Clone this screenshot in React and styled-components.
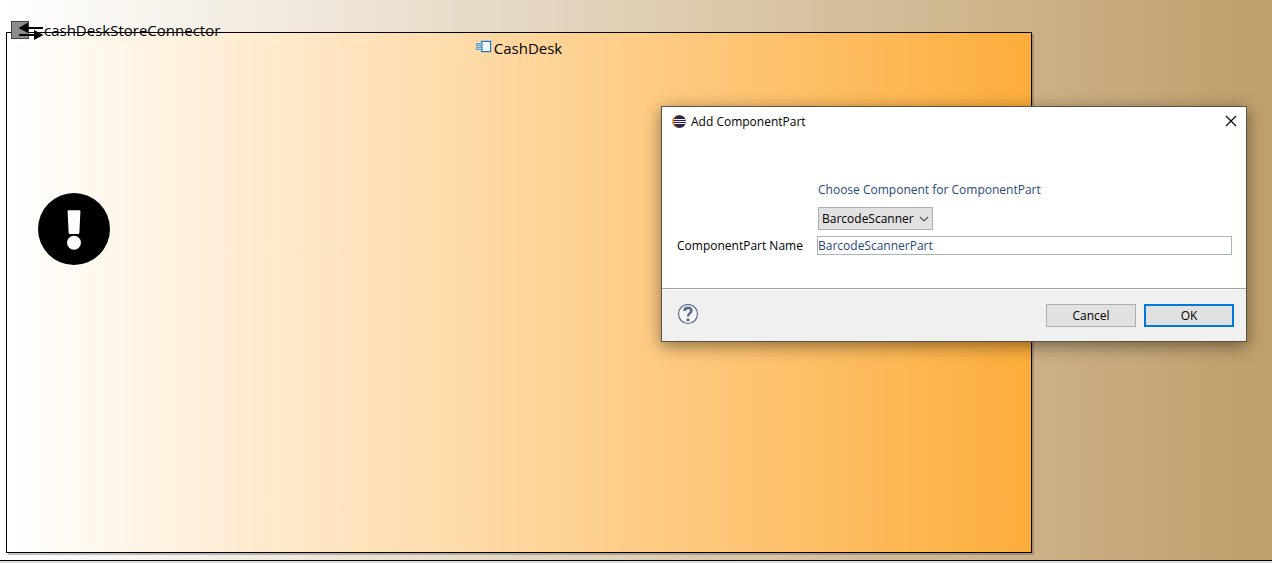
import React, { useState } from "react";
import styled, { createGlobalStyle } from "styled-components";

const GlobalStyle = createGlobalStyle`
  * { box-sizing: border-box; }
  body {
    margin: 0;
    color: #000;
    font: 12px/16px "Open Sans", "Noto Sans", sans-serif;
  }
`;

const Page = styled.div`
  position: relative;
  display: flex;
  flex-direction: column;
  min-height: 100vh;
  background: #dcdadd;
  padding-bottom: 2px;
  overflow: hidden;
`;

const Diagram = styled.main`
  flex: 1;
  display: flex;
  padding: 32px 240px 7px 6px;
  border-bottom: 1px solid #000;
  background: linear-gradient(to right, #fff, #bf9f6a);
`;

const ComponentNode = styled.section`
  position: relative;
  flex: 1;
  display: flex;
  flex-direction: column;
  align-items: flex-start;
  border: 1px solid #000;
  background: linear-gradient(to right, #fff, #fdad3b);
  box-shadow: 2px 2px 0 rgba(90, 80, 90, 0.35);
`;

const NodeTitle = styled.h1`
  display: flex;
  align-self: center;
  align-items: flex-start;
  gap: 2px;
  margin: 5px 0 0;
  font-size: 15px;
  line-height: 20px;
  font-weight: 400;

  svg { margin-top: 2px; }
`;

const Alert = styled.div`
  margin: 135px 0 0 31px;
  line-height: 0;
`;

const Port = styled.div`
  position: absolute;
  top: -13px;
  left: 4px;
  display: flex;
  align-items: center;
  font-size: 15px;
  line-height: 20px;
`;

const Dialog = styled.form`
  position: absolute;
  top: 106px;
  right: 25px;
  width: 586px;
  border: 1px solid #5d523f;
  background: #fff;
  box-shadow: 0 4px 16px rgba(0, 0, 0, 0.45);
`;

const TitleBar = styled.header`
  display: flex;
  align-items: center;
  gap: 5px;
  height: 30px;
  padding: 0 8px 0 10px;
`;

const DialogTitle = styled.h2`
  flex: 1;
  margin: 0;
  font-size: 12px;
  font-weight: 400;
`;

const IconButton = styled.button`
  display: flex;
  padding: 0;
  border: 0;
  background: none;
`;

const Fields = styled.div`
  display: grid;
  grid-template-columns: 140px 1fr;
  align-items: center;
  padding: 45px 14px 33px 15px;
`;

const Hint = styled.label`
  grid-column: 2;
  margin: 0 0 9px 1px;
  color: #1f4a7d;
`;

const SelectBox = styled.div`
  grid-column: 2;
  position: relative;
  justify-self: start;
  display: flex;
  margin: 0 0 6px 1px;

  svg {
    position: absolute;
    right: 4px;
    top: 8px;
    pointer-events: none;
  }
`;

const Select = styled.select`
  appearance: none;
  width: 115px;
  height: 23px;
  padding: 0 3px;
  border: 1px solid #adadad;
  border-radius: 0;
  background: #e1e1e1;
  color: #000;
  font: inherit;
`;

const TextInput = styled.input`
  width: 100%;
  height: 19px;
  padding: 0;
  border: 1px solid #a9b4bf;
  background: #fff;
  color: #1f4a7d;
  font: inherit;
`;

const Footer = styled.footer`
  display: flex;
  align-items: flex-start;
  gap: 8px;
  height: 53px;
  padding: 15px 12px 0 15px;
  border-top: 1px solid #a0a0a0;
  box-shadow: inset 0 1px 0 #fff;
  background: #f0f0f0;
`;

const Spacer = styled.span`
  flex: 1;
`;

const Button = styled.button`
  width: 90px;
  height: 23px;
  padding: 1px 0 0;
  border: 0;
  box-shadow: inset 0 0 0 ${(p) => (p.$primary ? "2px #0078d7" : "1px #adadad")};
  background: #e1e1e1;
  color: #000;
  font: inherit;
`;

const ConnectorIcon = () => (
  <svg width="33" height="20" viewBox="0 0 33 20" aria-hidden="true">
    <rect x="0.5" y="1.5" width="17" height="17" fill="#8c8c8c" stroke="#444" />
    <path d="M12 8H32M8 15H27" stroke="#000" strokeWidth="2" />
    <path d="M7.500 8L17 2.500V13ZM32.500 15L23 10V20Z" />
  </svg>
);

const ComponentIcon = () => (
  <svg width="16" height="14" viewBox="0 0 16 14" aria-hidden="true">
    <path d="M4 0.500H15.500V12.500H4" fill="none" stroke="#8fb8d6" strokeOpacity=".55" />
    <rect x="5.500" y="1.500" width="9" height="10" fill="#f2f8fd" stroke="#2774b5" />
    <rect x="0" y="3" width="7" height="3" fill="#5d9fce" />
    <rect x="0" y="7" width="7" height="3" fill="#5d9fce" />
    <path d="M1 4.500H6M1 8.500H6" stroke="#a5cde6" />
  </svg>
);

const AlertIcon = () => (
  <svg width="72" height="72" viewBox="0 0 72 72" role="img" aria-label="Warning">
    <circle cx="36" cy="36" r="36" />
    <path d="M30.800 17.200H41.200Q42.500 17.200 42.400 18.500L41.400 39.500Q41.300 41 40 41H32Q30.700 41 30.600 39.500L29.600 18.500Q29.500 17.200 30.800 17.200Z" fill="#fffdf9" />
    <circle cx="36" cy="49.800" r="7" fill="#fffdf9" />
  </svg>
);

const EclipseIcon = () => (
  <svg width="14" height="14" viewBox="0 0 14 14" aria-hidden="true">
    <circle cx="6.500" cy="6.500" r="6.500" fill="#f7941e" />
    <circle cx="7.700" cy="6.500" r="6.300" fill="#2c2255" />
    <path d="M2 4.500H13.500M1.500 6.500H14M2 8.500H13.500" stroke="#f3f0fa" />
  </svg>
);

const CloseIcon = () => (
  <svg width="14" height="14" viewBox="0 0 14 14" aria-hidden="true">
    <path d="M2 1L12 11M12 1L2 11" stroke="#000" strokeWidth="1.100" />
  </svg>
);

const ChevronIcon = () => (
  <svg width="10" height="8" viewBox="0 0 10 8" aria-hidden="true">
    <path d="M1 2L5 6L9 2" fill="none" stroke="#505050" strokeWidth="1.100" />
  </svg>
);

const HelpIcon = () => (
  <svg width="22" height="22" viewBox="0 0 22 22" aria-hidden="true">
    <circle cx="11" cy="10" r="9.500" fill="#f7f7f7" stroke="#5a6c8c" strokeWidth="1.200" />
    <path d="M7.400 6.800C7.800 2.800 14.600 3 14.400 6.700C14.300 9.200 11 9.200 11 12.600" fill="none" stroke="#5a6c8c" strokeWidth="2.600" />
    <circle cx="11" cy="15.800" r="1.600" fill="#5a6c8c" />
  </svg>
);

export default function App() {
  const [name, setName] = useState("BarcodeScannerPart");
  return (
    <Page>
      <GlobalStyle />
      <Diagram>
        <ComponentNode>
          <NodeTitle>
            <ComponentIcon />
            CashDesk
          </NodeTitle>
          <Alert>
            <AlertIcon />
          </Alert>
          <Port>
            <ConnectorIcon />
            cashDeskStoreConnector
          </Port>
        </ComponentNode>
      </Diagram>
      <Dialog role="dialog" aria-labelledby="dialog-title" onSubmit={(e) => e.preventDefault()}>
        <TitleBar>
          <EclipseIcon />
          <DialogTitle id="dialog-title">Add ComponentPart</DialogTitle>
          <IconButton type="button" aria-label="Close">
            <CloseIcon />
          </IconButton>
        </TitleBar>
        <Fields>
          <Hint htmlFor="component">Choose Component for ComponentPart</Hint>
          <SelectBox>
            <Select id="component" defaultValue="BarcodeScanner">
              <option>BarcodeScanner</option>
            </Select>
            <ChevronIcon />
          </SelectBox>
          <label htmlFor="part-name">ComponentPart Name</label>
          <TextInput id="part-name" value={name} onChange={(e) => setName(e.target.value)} />
        </Fields>
        <Footer>
          <IconButton type="button" aria-label="Help">
            <HelpIcon />
          </IconButton>
          <Spacer />
          <Button type="button">Cancel</Button>
          <Button type="submit" $primary>OK</Button>
        </Footer>
      </Dialog>
    </Page>
  );
}
